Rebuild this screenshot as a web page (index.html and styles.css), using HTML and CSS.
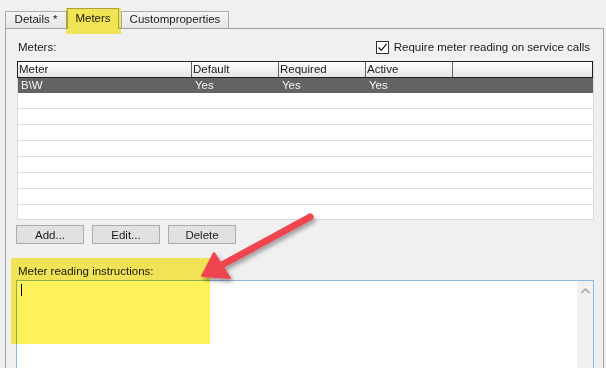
FILE: index.html
```html
<!DOCTYPE html>
<html lang="en">
<head>
    <meta charset="UTF-8">
    <title>Meters</title>
    <link rel="stylesheet" href="styles.css">
</head>
<body>
    <!-- Tab strip -->
    <div class="tabs">
        <div class="tab tab-details">Details *</div>
        <div class="tab tab-meters selected">Meters</div>
        <div class="tab tab-custom">Customproperties</div>
    </div>

    <div class="panel">
        <div class="meters-head">
            <span class="label">Meters:</span>
            <label class="check">
                <span class="box">
                    <svg width="11" height="11" viewBox="0 0 11 11"><path d="M1.5 5.5 L4.3 8.3 L9.6 1.8" fill="none" stroke="#222" stroke-width="1.3"/></svg>
                </span>
                Require meter reading on service calls
            </label>
        </div>

        <!-- Meters grid -->
        <div class="grid">
            <div class="grid-head">
                <div class="cell c1">Meter</div>
                <div class="cell c2">Default</div>
                <div class="cell c3">Required</div>
                <div class="cell c4">Active</div>
                <div class="cell c5"></div>
            </div>
            <div class="row selected">
                <div class="cell c1">B\W</div>
                <div class="cell c2">Yes</div>
                <div class="cell c3">Yes</div>
                <div class="cell c4">Yes</div>
                <div class="cell c5"></div>
            </div>
            <div class="row"></div>
            <div class="row"></div>
            <div class="row"></div>
            <div class="row"></div>
            <div class="row"></div>
            <div class="row"></div>
            <div class="row"></div>
            <div class="row last"></div>
        </div>

        <div class="buttons">
            <button class="btn">Add...</button>
            <button class="btn">Edit...</button>
            <button class="btn">Delete</button>
        </div>

        <div class="label instr-label">Meter reading instructions:</div>
        <div class="textbox">
            <div class="text-area"><span class="caret"></span></div>
            <div class="scrollbar">
                <svg width="9" height="6" viewBox="0 0 9 6"><path d="M0.5 5 L4.5 1 L8.5 5" fill="none" stroke="#a8a8a8" stroke-width="1.6"/></svg>
            </div>
        </div>
    </div>

    <!-- Screenshot annotations -->
    <div class="mark mark-tab"></div>
    <div class="mark mark-instr"></div>
    <svg class="arrow" width="606" height="368" viewBox="0 0 606 368">
        <defs>
            <filter id="shadow" x="-20%" y="-20%" width="140%" height="140%">
                <feDropShadow dx="2" dy="3" stdDeviation="2" flood-color="#000" flood-opacity="0.35"/>
            </filter>
        </defs>
        <g filter="url(#shadow)" fill="#ee4450" stroke="#ee4450">
            <line x1="310" y1="217" x2="220" y2="266" stroke-width="7" stroke-linecap="round"/>
            <path d="M202 276 L214 253 L230 278 Z" stroke-width="2" stroke-linejoin="round"/>
        </g>
    </svg>
</body>
</html>
```

FILE: styles.css
```css
body {
    margin: 0;
    width: 606px;
    height: 368px;
    overflow: hidden;
    position: relative;
    background-color: #f0f0f0;
    font-family: "Liberation Sans", Arial, sans-serif;
    font-size: 11.5px;
    color: #1a1a1a;
}
.tabs {
    display: flex;
    align-items: flex-end;
    height: 28px;
    padding-left: 5px;
    position: relative;
    z-index: 1;
}
.tab {
    box-sizing: border-box;
    height: 17px;
    line-height: 15px;
    text-align: center;
    border: 1px solid #acacac;
    border-bottom: none;
    background: linear-gradient(#f4f4f4, #e6e6e6);
}
.tab-details {
    width: 62px;
}
.tab.selected {
    width: 52px;
    height: 21px;
    margin-bottom: -1px;
    line-height: 18px;
    background: #f0f0f0;
}
.tab-custom {
    width: 108px;
    margin-left: 2px;
}
.panel {
    box-sizing: border-box;
    height: 340px;
    margin: 0 2px 0 5px;
    padding: 0 9px 0 11px;
    border: 1px solid #a0a0a0;
    border-bottom: none;
}
.meters-head {
    display: flex;
    justify-content: space-between;
    align-items: center;
    height: 18px;
    margin-top: 9px;
    margin-bottom: 5px;
}
.label {
    padding-left: 1px;
}
.check {
    display: flex;
    align-items: center;
    gap: 5px;
    padding-right: 4px;
}
.box {
    box-sizing: border-box;
    width: 13px;
    height: 13px;
    border: 1px solid #333;
    background-color: #fff;
    display: flex;
}
.grid {
    box-sizing: border-box;
    width: 577px;
    background-color: #fff;
    border: 1px solid #dadada;
    border-top: none;
}
.grid-head {
    display: flex;
    box-sizing: border-box;
    height: 17px;
    margin-left: -1px;
    border: 1px solid #202020;
    background: linear-gradient(#ffffff, #e4e4e4);
}
.cell {
    box-sizing: border-box;
    padding-left: 3px;
    line-height: 15px;
    white-space: nowrap;
}
.grid-head .cell {
    padding-left: 1px;
    border-right: 1px solid #606060;
}
.grid-head .c5 {
    border-right: none;
}
.c1 { width: 174px; }
.c2 { width: 87px; }
.c3 { width: 87px; }
.c4 { width: 87px; }
.c5 { flex: 1; }
.row {
    display: flex;
    box-sizing: border-box;
    height: 16px;
    border-bottom: 1px solid #e2e2e2;
}
.row.selected {
    height: 15px;
    border-bottom: none;
    background-color: #636363;
    color: #f4f4f4;
}
.row.last {
    height: 14px;
    border-bottom: none;
}
.buttons {
    display: flex;
    gap: 8px;
    margin: 5px 0 0 -1px;
}
.btn {
    box-sizing: border-box;
    width: 68px;
    height: 19px;
    padding: 0;
    font: inherit;
    color: #1a1a1a;
    background-color: #e1e1e1;
    border: 1px solid #adadad;
}
.instr-label {
    margin-top: 20px;
    height: 15px;
    line-height: 15px;
}
.textbox {
    display: flex;
    box-sizing: border-box;
    width: 578px;
    height: 100px;
    margin: 1px 0 0 -1px;
    border: 1px solid #8fb7d8;
    background-color: #fff;
}
.text-area {
    flex: 1;
    padding: 3px 0 0 4px;
}
.caret {
    display: block;
    width: 1px;
    height: 12px;
    background-color: #000;
}
.scrollbar {
    width: 16px;
    background-color: #f0f0f0;
    display: flex;
    justify-content: center;
    align-items: flex-start;
    padding-top: 7px;
}
.mark {
    position: absolute;
    background-color: #fff25a;
    mix-blend-mode: multiply;
    z-index: 2;
}
.mark-tab {
    left: 66px;
    top: 8px;
    width: 55px;
    height: 26px;
}
.mark-instr {
    left: 11px;
    top: 258px;
    width: 199px;
    height: 86px;
}
.arrow {
    position: absolute;
    left: 0;
    top: 0;
    z-index: 3;
}
```
